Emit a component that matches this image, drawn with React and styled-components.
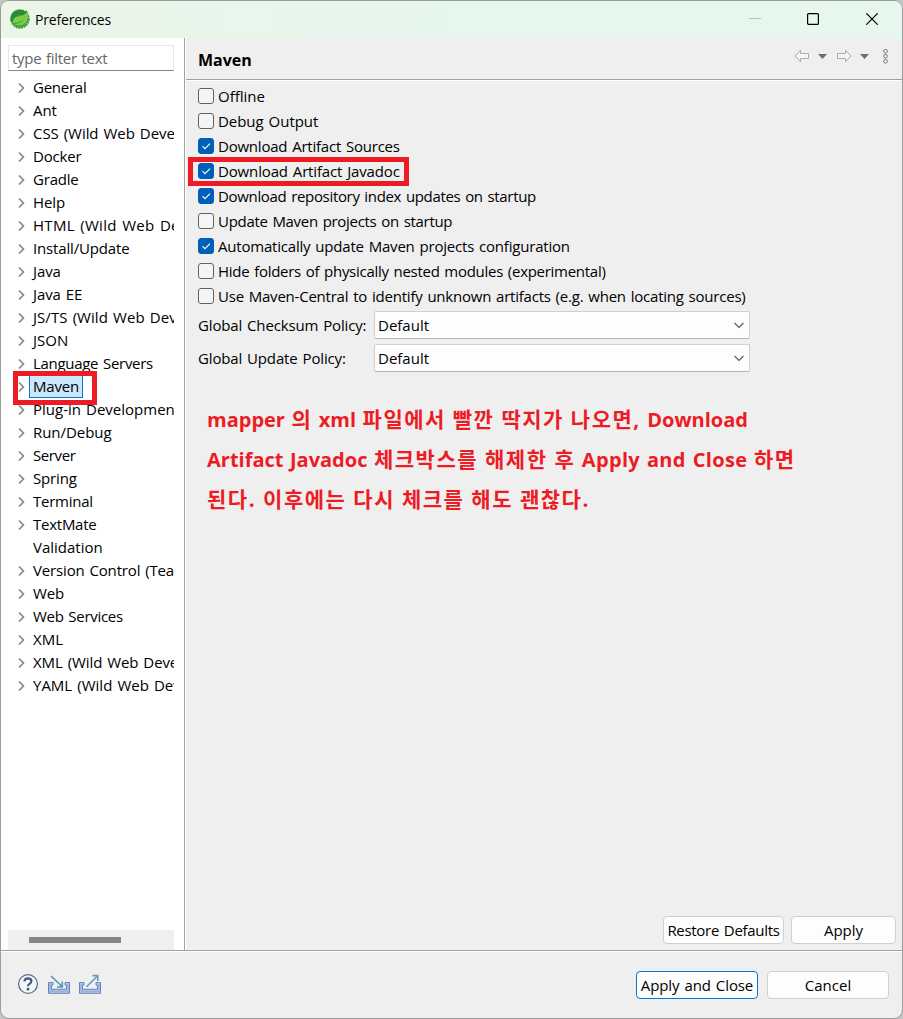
import React from "react";
import styled, { createGlobalStyle } from "styled-components";

const Global = createGlobalStyle`
  * { box-sizing: border-box; }
  body {
    margin: 0;
    background: #c4c4c4;
    color: #000;
    font: 15px "Open Sans", "Noto Sans CJK KR", sans-serif;
    word-spacing: 1.2px;
    overflow: hidden;
  }
`;

const Window = styled.div`
  width: 903px;
  height: 1019px;
  display: flex;
  flex-direction: column;
  border: 1px solid #9c9c9c;
  border-radius: 9px;
  background: #efefef;
  overflow: hidden;
`;

const TitleBar = styled.header`
  height: 37px;
  flex: none;
  display: flex;
  align-items: center;
  padding: 0 24px 2px 8px;
  background: linear-gradient(90deg, #ebf5e8, #e6f7ee 50%);
`;

const Title = styled.span`
  flex: 1;
  margin: 2px 0 0 4px;
  font-size: 14px;
  letter-spacing: -0.18px;
`;

const WindowControls = styled.div`
  display: flex;
  align-items: center;
  gap: 46px;
  & > :last-child { margin-left: 1px; }
`;

const Body = styled.div`
  height: 912px;
  flex: none;
  display: flex;
`;

const Sidebar = styled.aside`
  width: 184px;
  flex: none;
  display: flex;
  flex-direction: column;
  background: #fff;
  border-right: 1px solid #a0a0a0;
  padding: 7px 10px 0 7px;
`;

const Filter = styled.div`
  height: 26px;
  flex: none;
  display: flex;
  align-items: center;
  padding: 0 0 1px 3px;
  border: 1px solid #e6e6e6;
  border-bottom-color: #868686;
  color: #666;
  letter-spacing: -0.3px;
`;

const Tree = styled.ul`
  list-style: none;
  flex: 1;
  margin: 5px 0 0;
  padding: 0;
`;

const TreeRow = styled.li`
  position: relative;
  height: 23px;
  display: flex;
  align-items: center;
  padding-left: 9px;
  white-space: nowrap;
`;

const Twisty = styled.span`
  width: 12px;
  height: 12px;
  flex: none;
  display: flex;
`;

const TreeLabel = styled.span`
  height: 23px;
  line-height: 21px;
  flex: ${(p) => (p.$selected ? "none" : "1")};
  min-width: 0;
  overflow: hidden;
  padding: 0 ${(p) => (p.$selected ? 3 : 0)}px 0 3px;
  border: 1px solid ${(p) => (p.$selected ? "#0078d4" : "transparent")};
  border-right-width: ${(p) => (p.$selected ? 1 : 0)}px;
  background: ${(p) => (p.$selected ? "#cce8ff" : "none")};
  letter-spacing: ${(p) => p.$track}px;
`;

const ScrollTrack = styled.div`
  height: 20px;
  flex: none;
  padding: 7px 0 0 21px;
  background: #efefef;
`;

const ScrollThumb = styled.div`
  width: 92px;
  height: 6px;
  background: #858585;
`;

const Page = styled.main`
  flex: 1;
  display: flex;
  flex-direction: column;
  border-left: 1px solid #fff;
`;

const PageHeader = styled.div`
  height: 42px;
  flex: none;
  display: flex;
  align-items: center;
  justify-content: space-between;
  padding: 0 10px 0 12px;
  border-bottom: 1px solid #a0a0a0;
  box-shadow: 0 1px #fff;
`;

const PageTitle = styled.h1`
  margin: 3px 0 0;
  font-size: 16px;
  font-weight: 700;
`;

const Nav = styled.div`
  display: flex;
  align-items: center;
  margin-top: -5px;
`;

const Content = styled.section`
  flex: 1;
  padding: 3px 0 0 12px;
`;

const Option = styled.label`
  position: relative;
  height: 25px;
  display: flex;
  align-items: center;
  gap: 4px;
  letter-spacing: ${(p) => p.$track || 0}px;
  white-space: nowrap;
`;

const Box = styled.span`
  width: 16px;
  height: 16px;
  flex: none;
  display: flex;
  border: 1px solid ${(p) => (p.$on ? "#005fb8" : "#626262")};
  border-radius: 3px;
  background: ${(p) => (p.$on ? "#005fb8" : "#f5f5f5")};
`;

const Fields = styled.div`
  display: grid;
  gap: 5px;
  padding-top: 3px;
`;

const Field = styled.div`
  height: 28px;
  display: flex;
  align-items: center;
`;

const FieldLabel = styled.span`
  width: 176px;
  letter-spacing: -0.15px;
`;

const Select = styled.div`
  width: 376px;
  height: 28px;
  display: flex;
  align-items: center;
  justify-content: space-between;
  padding: 0 4px 0 3px;
  border: 1px solid #d0d0d0;
  border-bottom-color: #b4b4b4;
  border-radius: 2px;
  background: #fdfdfd;
`;

const Note = styled.div`
  margin: 28px 0 0 9px;
  color: #ed1c24;
  font-size: 20px;
  font-weight: 700;
  white-space: nowrap;
  word-spacing: 1.3px;
`;

const NoteLine = styled.div`
  height: 40px;
  line-height: 40px;
`;

const Ko = styled.span`
  font-size: 21px;
  letter-spacing: 1.5px;
  word-spacing: 0;
  line-height: 1;
`;

const Spaced = styled.span`
  letter-spacing: 0.35px;
`;

const Highlight = styled.span`
  position: absolute;
  z-index: 2;
  left: ${(p) => p.$x}px;
  top: ${(p) => p.$y}px;
  width: ${(p) => p.$w}px;
  height: ${(p) => p.$h}px;
  border: 5px solid #ed1c24;
`;

const PageActions = styled.div`
  display: flex;
  justify-content: flex-end;
  gap: 7px;
  padding: 0 6px 6px 0;
`;

const Button = styled.button`
  width: ${(p) => p.$w}px;
  height: 28px;
  padding: 0;
  border: 1px solid ${(p) => (p.$primary ? "#0078d4" : "#d0d0d0")};
  border-radius: 4px;
  background: #fdfdfd;
  color: #000;
  font: inherit;
  word-spacing: 1.2px;
  white-space: nowrap;
  letter-spacing: ${(p) => p.$track || 0}px;
`;

const Footer = styled.footer`
  flex: 1;
  display: flex;
  align-items: center;
  justify-content: space-between;
  padding: 0 13px 0 16px;
  border-top: 1px solid #a0a0a0;
  box-shadow: inset 0 1px #fff;
`;

const Group = styled.div`
  display: flex;
  align-items: center;
  gap: 9px;
  padding-bottom: ${(p) => p.$raise || 0}px;
`;

const Logo = () => (
  <svg width="22" height="22" viewBox="0 0 22 22">
    <circle cx="11" cy="11" r="8.8" fill="#43a93c" stroke="#3f9f3e" strokeWidth="2" strokeDasharray="1.8 0.9" />
    <path d="M1.6 13 Q1 6 5 3.5 Q10 0.5 15 3 Q16.5 3.4 18 2.5 Q19 5 18.4 7 Q12 6 8 8 Q3.5 10 3.5 15 Z" fill="#2b8a3c" />
    <path d="M4 15 Q3.5 9.5 9 8.6 Q15.5 8 18 3.6 Q20.5 10.5 16.5 15 Q12 18.5 6 16.4 Q12 15 15.4 11.2 Q10.5 14.6 4 15" fill="#7fcb45" />
  </svg>
);

const Chevron = () => (
  <svg width="12" height="12" viewBox="0 0 12 12">
    <path d="M2 1.5 L6.5 6 L2 10.5" fill="none" stroke="#858585" strokeWidth="1.6" />
  </svg>
);

const Tick = () => (
  <svg width="14" height="14" viewBox="0 0 14 14">
    <path d="M3.5 7.2 L6 9.7 L11 4.7" fill="none" stroke="#fff" strokeWidth="1.1" />
  </svg>
);

const Down = () => (
  <svg width="12" height="8" viewBox="0 0 12 8">
    <path d="M1.5 2 L6 6.5 L10.5 2" fill="none" stroke="#5a5a5a" strokeWidth="1.1" />
  </svg>
);

const NavIcons = () => (
  <svg width="98" height="18" viewBox="0 0 98 18">
    <g fill="#f6f6f6" stroke="#a9a9a9" strokeLinejoin="round">
      <path d="M1 9 L6.5 3.3 V6.5 H14.5 V11.5 H6.5 V14.7 Z" />
      <path d="M57 9 L51.5 3.3 V6.5 H43.5 V11.5 H51.5 V14.7 Z" />
    </g>
    <path d="M24 7 H33 L28.5 12 Z M66 7 H75 L70.5 12 Z" fill="#6b6e73" />
    <g fill="#fff" stroke="#6b6e73">
      <circle cx="91.5" cy="4.2" r="1.8" />
      <circle cx="91.5" cy="9.2" r="1.8" />
      <circle cx="91.5" cy="14.2" r="1.8" />
    </g>
  </svg>
);

const HelpIcon = () => (
  <svg width="22" height="22" viewBox="0 0 22 22">
    <circle cx="11" cy="11" r="9.4" fill="#f4f6f9" stroke="#5d6f8f" strokeWidth="1.3" />
    <path d="M7.4 8.3 Q7.7 5.3 11 5.3 Q14.4 5.4 14.4 8.2 Q14.4 9.9 12.4 10.9 Q11 11.7 11 13.3" fill="none" stroke="#46597d" strokeWidth="2.2" />
    <circle cx="11" cy="16.2" r="1.4" fill="#46597d" />
  </svg>
);

const TrayIcon = ({ out }) => (
  <svg width="22" height="20" viewBox="0 0 22 20">
    <path d="M0.5 8.5 V19.3 H21.5 V8.5 H17 V11 H18.5 V15.3 H3.5 V11 H5 V8.5 Z" fill="#b4c8e8" stroke="#6484bd" />
    <path d="M2 10 V17.3 H20 V10" fill="none" stroke="#8fabd8" />
    {out ? (
      <path d="M7.5 12.8 L18 2.5 M13.5 1.6 H18.8 V7" fill="none" stroke="#5ca0c6" strokeWidth="1.6" />
    ) : (
      <path d="M3 2 L14 12.5 M14.3 7.5 V13 H9" fill="none" stroke="#4f96bd" strokeWidth="1.6" />
    )}
  </svg>
);

const tree = [
  ["General", -0.25],
  ["Ant", -0.1],
  ["CSS (Wild Web Developer)", -0.06],
  ["Docker", -0.16],
  ["Gradle", -0.2],
  ["Help", -0.1],
  ["HTML (Wild Web Developer)", 0.3],
  ["Install/Update", -0.16],
  ["Java", -0.1],
  ["Java EE", -0.1],
  ["JS/TS (Wild Web Developer)", 0.05],
  ["JSON", 0],
  ["Language Servers", -0.3],
  ["Maven", -0.2],
  ["Plug-in Development", 0],
  ["Run/Debug", -0.05],
  ["Server", -0.4],
  ["Spring", -0.16],
  ["Terminal", -0.25],
  ["TextMate", -0.25],
  ["Validation", 0],
  ["Version Control (Team)", -0.16],
  ["Web", -0.1],
  ["Web Services", -0.3],
  ["XML", 0],
  ["XML (Wild Web Developer)", -0.1],
  ["YAML (Wild Web Developer)", 0],
];

const options = [
  ["Offline", false, 0],
  ["Debug Output", false, -0.05],
  ["Download Artifact Sources", true, -0.22],
  ["Download Artifact Javadoc", true, -0.15],
  ["Download repository index updates on startup", true, -0.33],
  ["Update Maven projects on startup", false, -0.3],
  ["Automatically update Maven projects configuration", true, -0.2],
  ["Hide folders of physically nested modules (experimental)", false, -0.28],
  ["Use Maven-Central to identify unknown artifacts (e.g. when locating sources)", false, -0.22],
];

export default function App() {
  return (
    <>
      <Global />
      <Window>
        <TitleBar>
          <Logo />
          <Title>Preferences</Title>
          <WindowControls>
            <svg width="12" height="12" viewBox="0 0 12 12"><path d="M0 5.5H12" stroke="#b5c2ba" /></svg>
            <svg width="12" height="12" viewBox="0 0 12 12"><rect x="0.6" y="0.6" width="10.8" height="10.8" rx="1" fill="none" stroke="#000" strokeWidth="1.2" /></svg>
            <svg width="12" height="12" viewBox="0 0 12 12"><path d="M0.3 0.3L11.7 11.7M11.7 0.3L0.3 11.7" stroke="#000" strokeWidth="1.2" /></svg>
          </WindowControls>
        </TitleBar>
        <Body>
          <Sidebar>
            <Filter>type filter text</Filter>
            <Tree>
              {tree.map(([name, track]) => (
                <TreeRow key={name}>
                  <Twisty>{name !== "Validation" && <Chevron />}</Twisty>
                  <TreeLabel $track={track} $selected={name === "Maven"}>{name}</TreeLabel>
                  {name === "Maven" && <Highlight $x={5} $y={-4} $w={84} $h={34} />}
                </TreeRow>
              ))}
            </Tree>
            <ScrollTrack><ScrollThumb /></ScrollTrack>
          </Sidebar>
          <Page>
            <PageHeader>
              <PageTitle>Maven</PageTitle>
              <Nav><NavIcons /></Nav>
            </PageHeader>
            <Content>
              {options.map(([text, on, track]) => (
                <Option key={text} $track={track}>
                  <Box $on={on}>{on && <Tick />}</Box>
                  <span>{text}</span>
                  {text.endsWith("Javadoc") && <Highlight $x={-10} $y={-1} $w={221} $h={29} />}
                </Option>
              ))}
              <Fields>
                <Field><FieldLabel>Global Checksum Policy:</FieldLabel><Select>Default<Down /></Select></Field>
                <Field><FieldLabel>Global Update Policy:</FieldLabel><Select>Default<Down /></Select></Field>
              </Fields>
              <Note>
                <NoteLine>mapper <Ko>의</Ko> xml <Ko>파일에서 빨깐 딱지가 나오면,</Ko> Download</NoteLine>
                <NoteLine>Artifact Javadoc <Ko>체크박스를 해제한 후</Ko> <Spaced>Apply and Close</Spaced> <Ko>하면</Ko></NoteLine>
                <NoteLine><Ko>된다. 이후에는 다시 체크를 해도 괜찮다.</Ko></NoteLine>
              </Note>
            </Content>
            <PageActions>
              <Button $w={121} $track={-0.3}>Restore Defaults</Button>
              <Button $w={105}>Apply</Button>
            </PageActions>
          </Page>
        </Body>
        <Footer>
          <Group $raise={2}>
            <HelpIcon />
            <TrayIcon />
            <TrayIcon out />
          </Group>
          <Group>
            <Button $w={122} $track={-0.1} $primary>Apply and Close</Button>
            <Button $w={122}>Cancel</Button>
          </Group>
        </Footer>
      </Window>
    </>
  );
}
